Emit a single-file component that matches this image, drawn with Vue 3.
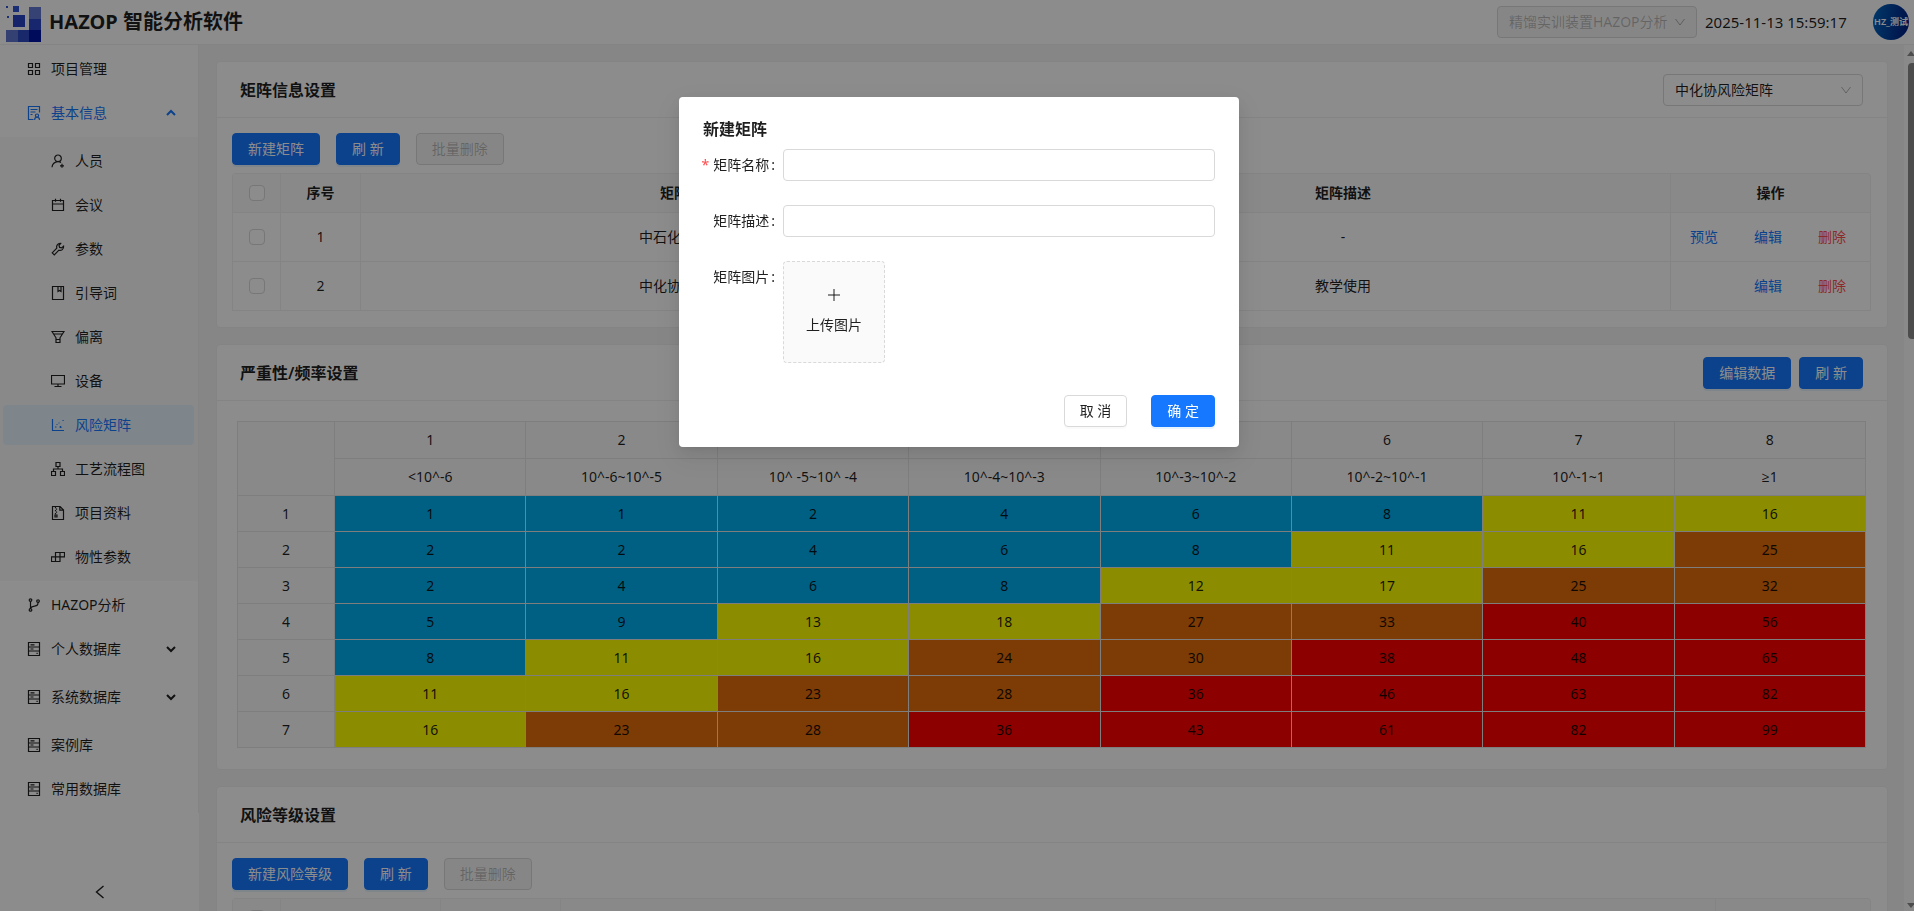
<template>
  <div class="layout">
    <header class="topbar">
      <svg class="logo" viewBox="0 0 36 36" aria-hidden="true">
        <rect x="0" y="0" width="2" height="2" fill="#2f55d4" />
        <rect x="7" y="0" width="6" height="6" fill="#2f55d4" />
        <rect x="1" y="10" width="2" height="2" fill="#2f55d4" />
        <rect x="7" y="9" width="12" height="12" fill="#2743c4" />
        <rect x="23" y="1" width="12" height="12" fill="#6378d4" />
        <rect x="23" y="13" width="12" height="12" fill="#2b46c6" />
        <rect x="0" y="24" width="12" height="12" fill="#6074d0" />
        <rect x="12" y="24" width="11" height="12" fill="#2f49c4" />
        <rect x="23" y="24" width="12" height="12" fill="#0014a8" />
      </svg>
      <h1 class="brand">HAZOP 智能分析软件</h1>
      <div class="select select-disabled">
        <select aria-label="项目" disabled>
          <option>精馏实训装置HAZOP分析</option>
        </select>
        <svg class="select-arrow" viewBox="0 0 12 12"><path d="M1.5 3l4.5 6 4.5-6" /></svg>
      </div>
      <time class="clock">2025-11-13 15:59:17</time>
      <span class="avatar">HZ_测试</span>
    </header>

    <div class="body">
      <nav class="sidebar">
        <ul class="menu">
          <li v-for="item in menu" :key="item.label" :class="{ closed: item.arrow === 'down' }">
            <a href="#" class="menu-item" :class="{ open: item.children }">
              <svg class="icon" viewBox="0 0 14 14"><path :d="icons[item.icon]" /></svg>
              <span>{{ item.label }}</span>
              <svg v-if="item.arrow" class="menu-arrow" viewBox="0 0 10 10">
                <path :d="item.arrow === 'up' ? 'M1 7l4-4 4 4' : 'M1 3l4 4 4-4'" />
              </svg>
            </a>
            <ul v-if="item.children" class="menu-sub">
              <li v-for="child in item.children" :key="child.label">
                <a href="#" class="menu-item child" :class="{ active: child.label === ativo }">
                  <svg class="icon" viewBox="0 0 14 14"><path :d="icons[child.icon]" /></svg>
                  <span>{{ child.label }}</span>
                </a>
              </li>
            </ul>
          </li>
        </ul>
        <button type="button" class="collapse" aria-label="收起菜单">
          <svg viewBox="0 0 14 14"><path d="M10.5 1l-7 6 7 6" /></svg>
        </button>
      </nav>

      <main class="content">
        <!-- 矩阵信息设置 -->
        <section class="card">
          <div class="card-head">
            <h2>矩阵信息设置</h2>
            <div class="select">
              <select v-model="matrizAtual" aria-label="当前矩阵">
                <option v-for="m in matrizes" :key="m.id">{{ m.nome }}</option>
              </select>
              <svg class="select-arrow" viewBox="0 0 12 12"><path d="M1.5 3l4.5 6 4.5-6" /></svg>
            </div>
          </div>
          <div class="card-body">
            <div class="toolbar">
              <button type="button" class="btn primary" @click="aberto = true">新建矩阵</button>
              <button type="button" class="btn primary">刷 新</button>
              <button type="button" class="btn" disabled>批量删除</button>
            </div>
            <table class="table">
              <colgroup>
                <col class="col-check" />
                <col class="col-index" />
                <col />
                <col />
                <col class="col-actions" />
              </colgroup>
              <thead>
                <tr>
                  <th><input type="checkbox" aria-label="全选" /></th>
                  <th>序号</th>
                  <th>矩阵名称</th>
                  <th>矩阵描述</th>
                  <th>操作</th>
                </tr>
              </thead>
              <tbody>
                <tr v-for="m in matrizes" :key="m.id">
                  <td><input type="checkbox" :aria-label="m.nome" /></td>
                  <td>{{ m.id }}</td>
                  <td>{{ m.nome }}</td>
                  <td>{{ m.descricao }}</td>
                  <td>
                    <div class="actions">
                      <a v-if="m.preview" href="#">预览</a>
                      <a href="#">编辑</a>
                      <a href="#" class="danger">删除</a>
                    </div>
                  </td>
                </tr>
              </tbody>
            </table>
          </div>
        </section>

        <!-- 严重性/频率设置 -->
        <section class="card">
          <div class="card-head">
            <h2>严重性/频率设置</h2>
            <div class="head-buttons">
              <button type="button" class="btn primary">编辑数据</button>
              <button type="button" class="btn primary">刷 新</button>
            </div>
          </div>
          <div class="card-body matrix-body">
            <table class="matrix">
              <colgroup>
                <col class="col-level" />
                <col v-for="(f, i) in frequencias" :key="i" />
              </colgroup>
              <thead>
                <tr>
                  <th rowspan="2"></th>
                  <th v-for="(f, i) in frequencias" :key="i">{{ i + 1 }}</th>
                </tr>
                <tr>
                  <th v-for="(f, i) in frequencias" :key="i">{{ f }}</th>
                </tr>
              </thead>
              <tbody>
                <tr v-for="(linha, i) in valores" :key="i">
                  <th>{{ i + 1 }}</th>
                  <td v-for="(v, j) in linha" :key="j" :class="nivel(v)">{{ v }}</td>
                </tr>
              </tbody>
            </table>
          </div>
        </section>

        <!-- 风险等级设置 -->
        <section class="card">
          <div class="card-head">
            <h2>风险等级设置</h2>
          </div>
          <div class="card-body">
            <div class="toolbar">
              <button type="button" class="btn primary">新建风险等级</button>
              <button type="button" class="btn primary">刷 新</button>
              <button type="button" class="btn" disabled>批量删除</button>
            </div>
            <table class="table">
              <colgroup>
                <col class="col-check" />
                <col class="col-grade" />
                <col class="col-color" />
                <col />
                <col class="col-edit" />
              </colgroup>
              <thead>
                <tr>
                  <th><input type="checkbox" aria-label="全选风险等级" /></th>
                  <th></th>
                  <th></th>
                  <th></th>
                  <th></th>
                </tr>
              </thead>
            </table>
          </div>
        </section>
      </main>

      <div class="scrollbar" aria-hidden="true">
        <i class="scroll-up"></i>
        <i class="scroll-thumb"></i>
        <i class="scroll-down"></i>
      </div>
    </div>

    <!-- 新建矩阵 -->
    <div v-if="aberto" class="mask">
      <form class="modal" role="dialog" aria-labelledby="modal-title" @submit.prevent="aberto = false">
        <h2 id="modal-title">新建矩阵</h2>
        <div class="field">
          <label for="nome" class="required">矩阵名称</label>
          <input id="nome" v-model="nome" type="text" />
        </div>
        <div class="field">
          <label for="descricao">矩阵描述</label>
          <input id="descricao" v-model="descricao" type="text" />
        </div>
        <div class="field">
          <label for="imagem">矩阵图片</label>
          <button id="imagem" type="button" class="upload">
            <svg viewBox="0 0 14 14"><path d="M7 1v12M1 7h12" /></svg>
            <span>上传图片</span>
          </button>
        </div>
        <div class="modal-footer">
          <button type="button" class="btn" @click="aberto = false">取 消</button>
          <button type="submit" class="btn primary">确 定</button>
        </div>
      </form>
    </div>
  </div>
</template>

<script setup>
import { ref } from 'vue';

// Estado do modal e do formulário
const aberto = ref(true);
const nome = ref('');
const descricao = ref('');

const ativo = ref('风险矩阵');
const matrizAtual = ref('中化协风险矩阵');

const menu = [
  { label: '项目管理', icon: 'grid' },
  {
    label: '基本信息',
    icon: 'info',
    arrow: 'up',
    children: [
      { label: '人员', icon: 'user' },
      { label: '会议', icon: 'calendar' },
      { label: '参数', icon: 'tool' },
      { label: '引导词', icon: 'book' },
      { label: '偏离', icon: 'funnel' },
      { label: '设备', icon: 'desktop' },
      { label: '风险矩阵', icon: 'chart' },
      { label: '工艺流程图', icon: 'tree' },
      { label: '项目资料', icon: 'zip' },
      { label: '物性参数', icon: 'build' },
    ],
  },
  { label: 'HAZOP分析', icon: 'branch' },
  { label: '个人数据库', icon: 'database', arrow: 'down' },
  { label: '系统数据库', icon: 'database', arrow: 'down' },
  { label: '案例库', icon: 'database' },
  { label: '常用数据库', icon: 'database' },
];

const icons = {
  grid: 'M1.5 1.5h4v4h-4zM8.5 1.5h4v4h-4zM1.5 8.5h4v4h-4zM8.5 8.5h4v4h-4z',
  info: 'M6.5 13.5h-5V.5h11v6M3.5 3.5h7M3.5 6h5M3.5 8.5h2M10 8a1.6 1.6 0 1 1 0 3.2a1.6 1.6 0 1 1 0-3.2M7.5 13.8c.3-1.7 1.3-2.6 2.5-2.6s2.3.9 2.6 2.6',
  user: 'M7 1a3.3 3.3 0 1 1 0 6.6A3.3 3.3 0 1 1 7 1M1 13.2c.2-3 2.6-5.6 6-5.6 1.2 0 2.2.4 3 .9M11 9.8v4M9 11.800h4',
  calendar: 'M1.5 2.5h11v10h-11zM1.5 6h11M4.5.8v3M9.5.8v3',
  tool: 'M1.2 10.8l4.6-4.6C5 3.8 6.6 1.2 9.6 1.400L8 3.400l.6 2 2 .5 2-1.700c.4 3-2.3 4.800-4.700 4L3.300 12.900z',
  book: 'M1.5.5h11v13h-11zM7 .5v5l1.5-1L10 5.5v-5',
  funnel: 'M1 1.5h12L9 7.8v4.7H5V7.8zM5 9.5h4M2.5 4h9',
  desktop: 'M.5 1.5h13V10H.5zM7 10v2.5M3.5 12.5h7',
  chart: 'M1.5 1v11.5H13M4 9h1.500M5.500 6.500h1M8.500 9h2M9.500 8v2M7.500 5h1M11.500 2.500h1.200M9 9.500h1.500',
  tree: 'M5 .5h4v4H5zM.5 9.5h4v4h-4zM9.5 9.5h4v4h-4zM7 4.5V7M2.5 9.5V7h9v2.5',
  zip: 'M1.5.5H9L12.5 4v9.5h-11zM8.800.5v3.700h3.700M4.500 1v1.300M5.500 2.500v1.300M4.500 4v1.300M5.500 5.500v1.300M4.500 7v1.300M4 9h2v2H4z',
  build: 'M4.5 2.5h9v4.3h-9zM9 2.5v9M.5 6.800H9v4.700H.5zM4.500 6.800v4.700',
  branch: 'M3.5.8a1.3 1.3 0 1 1 0 2.6a1.3 1.3 0 1 1 0-2.6M3.5 3.5v7M3.5 10.6a1.3 1.3 0 1 1 0 2.6a1.3 1.3 0 1 1 0-2.6M11 1.800a1.3 1.3 0 1 1 0 2.600a1.3 1.3 0 1 1 0-2.600M11 4.500c0 2.500-.5 3-3.500 3.700-2.500.5-3.600.8-4 2',
  database: 'M1.5.5h11v13h-11zM1.5 5h11M1.5 9h11M3.5 2.8h4M3.5 7h3M9.5 11.3h1.2',
};

const matrizes = [
  { id: 1, nome: '中石化风险矩阵', descricao: '-', preview: true },
  { id: 2, nome: '中化协风险矩阵', descricao: '教学使用', preview: false },
];

const frequencias = [
  '<10^-6',
  '10^-6~10^-5',
  '10^ -5~10^ -4',
  '10^-4~10^-3',
  '10^-3~10^-2',
  '10^-2~10^-1',
  '10^-1~1',
  '≥1',
];

const valores = [
  [1, 1, 2, 4, 6, 8, 11, 16],
  [2, 2, 4, 6, 8, 11, 16, 25],
  [2, 4, 6, 8, 12, 17, 25, 32],
  [5, 9, 13, 18, 27, 33, 40, 56],
  [8, 11, 16, 24, 30, 38, 48, 65],
  [11, 16, 23, 28, 36, 46, 63, 82],
  [16, 23, 28, 36, 43, 61, 82, 99],
];

// Cor da célula conforme o valor do risco
const nivel = (v) => {
  if (v < 10) return 'low';
  if (v < 20) return 'medium';
  if (v < 35) return 'high';
  return 'critical';
};
</script>

<style>
body {
  margin: 0;
  overflow: hidden;
}
</style>

<style scoped>
.layout {
  display: flex;
  flex-direction: column;
  height: 100vh;
  font-family: 'Noto Sans', 'Open Sans', Roboto, 'Noto Sans CJK SC', sans-serif;
  font-size: 14px;
  line-height: 22px;
  color: rgba(0, 0, 0, 0.88);
  background: #fff;
}

.layout * {
  box-sizing: border-box;
}

button,
input,
select {
  font: inherit;
  color: inherit;
}

h1,
h2,
ul {
  margin: 0;
  padding: 0;
}

ul {
  list-style: none;
}

a {
  color: #1677ff;
  text-decoration: none;
}

svg {
  fill: none;
  stroke: currentColor;
}

/* topo */
.topbar {
  display: flex;
  align-items: center;
  flex: none;
  height: 45px;
  padding: 0 5px 0 6px;
  border-bottom: 1px solid #f0f0f0;
}

.logo {
  width: 36px;
  height: 36px;
  margin: 3px 7px 0 0;
  stroke: none;
}

.brand {
  flex: 1;
  font-size: 20px;
  line-height: 28px;
  font-weight: 700;
}

.clock {
  width: 145px;
  margin: 0 23px 0 8px;
  font-size: 15px;
  white-space: nowrap;
}

.avatar {
  display: flex;
  align-items: center;
  justify-content: center;
  width: 36px;
  height: 36px;
  border-radius: 50%;
  background: linear-gradient(100deg, #0068c0, #001a80);
  color: #fff;
  font-size: 9px;
  font-weight: 600;
}

.select {
  position: relative;
  width: 200px;
  height: 32px;
}

.select select {
  width: 100%;
  height: 100%;
  padding: 0 28px 0 11px;
  border: 1px solid #d9d9d9;
  border-radius: 4px;
  background: #fff;
  appearance: none;
}

.select-disabled select {
  background: #f5f5f5;
  color: rgba(0, 0, 0, 0.25);
  opacity: 1;
}

.select-arrow {
  position: absolute;
  top: 10px;
  right: 11px;
  width: 12px;
  height: 12px;
  color: rgba(0, 0, 0, 0.3);
  pointer-events: none;
}

/* menu lateral */
.body {
  display: flex;
  flex: 1;
  min-height: 0;
}

.sidebar {
  display: flex;
  flex-direction: column;
  flex: none;
  width: 199px;
}

.menu {
  padding-bottom: 4px;
  border-right: 1px solid #f0f0f0;
}

.menu li {
  padding-top: 4px;
}

.menu .closed {
  padding-bottom: 4px;
}

.menu-item {
  display: flex;
  align-items: center;
  gap: 10px;
  height: 40px;
  margin: 0 4px 0 3px;
  padding: 0 18px 0 24px;
  border-radius: 4px;
  color: rgba(0, 0, 0, 0.88);
}

.menu-item.child {
  padding-left: 48px;
}

.menu-item.open,
.menu-item.active {
  color: #1677ff;
}

.menu-item.active {
  background: #e6f4ff;
}

.menu-sub {
  margin-top: 4px;
  padding-bottom: 4px;
  background: #fafafa;
}

.icon {
  flex: none;
  width: 14px;
  height: 14px;
  stroke-width: 1.2;
}

.menu-arrow {
  width: 10px;
  height: 10px;
  margin-left: auto;
  stroke-width: 2;
}

.collapse {
  display: flex;
  align-items: center;
  justify-content: center;
  height: 38px;
  margin-top: auto;
  border: 0;
  background: none;
}

.collapse svg {
  width: 14px;
  height: 14px;
  stroke-width: 1.4;
}

/* cartões */
.content {
  display: flex;
  flex-direction: column;
  flex: 1;
  gap: 16px;
  min-width: 0;
  padding: 16px 16px 0 17px;
  overflow: hidden;
  background: #f5f5f5;
}

.card {
  flex: none;
  border: 1px solid #f0f0f0;
  border-radius: 4px;
  background: #fff;
}

.card-head {
  display: flex;
  align-items: center;
  justify-content: space-between;
  height: 56px;
  padding: 0 24px 0 23px;
  border-bottom: 1px solid #f0f0f0;
}

.card-head h2,
.modal h2 {
  font-size: 16px;
  line-height: 24px;
  font-weight: 600;
}

.head-buttons {
  display: flex;
  gap: 8px;
}

.card-body {
  padding: 15px 16px 16px 15px;
}

.toolbar {
  display: flex;
  gap: 16px;
  margin-bottom: 8px;
}

.btn {
  height: 32px;
  padding: 0 15px;
  border: 1px solid #d9d9d9;
  border-radius: 4px;
  background: #fff;
  box-shadow: 0 2px 0 rgba(0, 0, 0, 0.02);
  white-space: nowrap;
}

.btn.primary {
  border-color: #1677ff;
  background: #1677ff;
  box-shadow: 0 2px 0 rgba(5, 145, 255, 0.1);
  color: #fff;
}

.btn:disabled {
  background: #f5f5f5;
  box-shadow: none;
  color: rgba(0, 0, 0, 0.25);
}

/* tabelas */
.table {
  width: 100%;
  border-collapse: separate;
  border-spacing: 0;
  border-top: 1px solid #f0f0f0;
  border-left: 1px solid #f0f0f0;
  border-radius: 4px 4px 0 0;
  table-layout: fixed;
  text-align: center;
}

.table th,
.table td {
  height: 49px;
  padding: 0 8px;
  border-right: 1px solid #f0f0f0;
  border-bottom: 1px solid #f0f0f0;
}

.table th {
  height: 39px;
  background: #fafafa;
  font-weight: 600;
}

.table th:last-child {
  border-top-right-radius: 4px;
}

.col-check {
  width: 48px;
}

.col-index {
  width: 80px;
}

.col-actions {
  width: 200px;
}

.col-grade {
  width: 160px;
}

.col-color {
  width: 120px;
}

.col-edit {
  width: 155px;
}

.table input {
  display: block;
  width: 16px;
  height: 16px;
  margin: 0 auto;
  border: 1px solid #d9d9d9;
  border-radius: 4px;
  background: #fff;
  appearance: none;
}

.actions {
  display: flex;
  justify-content: flex-end;
  gap: 36px;
  padding-right: 16px;
}

.actions .danger {
  color: #ff4d4f;
}

.matrix-body {
  padding: 20px 21px 21px 20px;
}

.matrix {
  width: 100%;
  border-collapse: collapse;
  table-layout: fixed;
  text-align: center;
}

.matrix th,
.matrix td {
  height: 36px;
  padding: 0;
  border: 1px solid #e5e5e5;
  font-weight: 400;
}

.matrix th {
  background: #fafafa;
}

.matrix thead th {
  height: 37px;
}

.col-level {
  width: 97px;
}

.low {
  background: #00b0f0;
}

.medium {
  background: #ffff00;
}

.high {
  background: #e46c0a;
}

.critical {
  background: #ff0000;
}

/* barra de rolagem */
.scrollbar {
  display: flex;
  flex-direction: column;
  align-items: center;
  flex: none;
  width: 10px;
  padding: 6px 0 3px 4px;
  background: #fcfcfc;
}

.scroll-up,
.scroll-down {
  border: 4px solid transparent;
}

.scroll-up {
  border-top: 0;
  border-bottom: 5px solid #8b8b8b;
}

.scroll-down {
  margin-top: auto;
  border-top: 5px solid #8b8b8b;
  border-bottom: 0;
}

.scroll-thumb {
  width: 7px;
  height: 276px;
  margin-top: 7px;
  border-radius: 4px 0 0 4px;
  background: #8b8b8b;
}

/* modal */
.mask {
  position: fixed;
  inset: 0;
  display: flex;
  align-items: flex-start;
  justify-content: center;
  padding: 97px 0 0 4px;
  background: rgba(0, 0, 0, 0.45);
}

.modal {
  width: 560px;
  padding: 20px 24px;
  border-radius: 4px;
  background: #fff;
  box-shadow: 0 6px 16px rgba(0, 0, 0, 0.08), 0 3px 6px -4px rgba(0, 0, 0, 0.12),
    0 9px 28px 8px rgba(0, 0, 0, 0.05);
}

.modal h2 {
  margin-bottom: 8px;
}

.field {
  display: flex;
  align-items: flex-start;
  margin-bottom: 24px;
}

.field label {
  display: flex;
  justify-content: flex-end;
  flex: none;
  width: 80px;
  padding-right: 8px;
  line-height: 32px;
  white-space: nowrap;
}

.field label::after {
  margin-left: 2px;
  content: ':';
}

.field .required::before {
  margin-right: 4px;
  color: #ff4d4f;
  content: '*';
}

.field input {
  flex: 1;
  height: 32px;
  padding: 4px 11px;
  border: 1px solid #d9d9d9;
  border-radius: 4px;
}

.upload {
  display: flex;
  flex-direction: column;
  align-items: center;
  justify-content: center;
  gap: 12px;
  width: 102px;
  height: 102px;
  border: 1px dashed #d9d9d9;
  border-radius: 4px;
  background: #fafafa;
}

.upload svg {
  width: 14px;
  height: 14px;
}

.modal-footer {
  display: flex;
  justify-content: flex-end;
  gap: 24px;
  padding-top: 8px;
}
</style>
